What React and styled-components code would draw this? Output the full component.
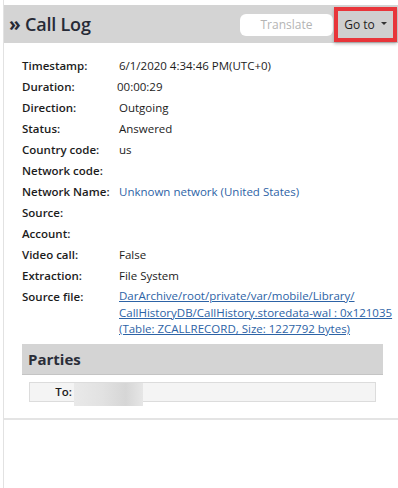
import React from "react";
import styled, { createGlobalStyle } from "styled-components";

const GlobalStyle = createGlobalStyle`
  html, body {
    margin: 0;
    padding: 0;
    background: #ffffff;
    font-family: "Open Sans", "Noto Sans", sans-serif;
  }
`;

const fields = [
  { label: "Timestamp:", value: "6/1/2020 4:34:46 PM(UTC+0)" },
  { label: "Duration:", value: "00:00:29", shift: -2 },
  { label: "Direction:", value: "Outgoing" },
  { label: "Status:", value: "Answered" },
  { label: "Country code:", value: "us" },
  { label: "Network code:", value: "" },
  { label: "Network Name:", value: "Unknown network (United States)", kind: "blue" },
  { label: "Source:", value: "" },
  { label: "Account:", value: "" },
  { label: "Video call:", value: "False" },
  { label: "Extraction:", value: "File System" },
];

function App() {
  return (
    <Page>
      <GlobalStyle />
      <Panel>
        <Header>
          <Title>
            <Chevron>»</Chevron> Call Log
          </Title>
          <Actions>
            <TranslateButton>Translate</TranslateButton>
            <GoToButton>
              Go to <Caret />
            </GoToButton>
          </Actions>
        </Header>

        <Fields>
          {fields.map((f) => (
            <Row key={f.label}>
              <Label>{f.label}</Label>
              <Value $blue={f.kind === "blue"} $shift={f.shift || 0}>
                {f.value}
              </Value>
            </Row>
          ))}
          <Row>
            <Label>Source file:</Label>
            <LinkValue href="#">
              DarArchive/root/private/var/mobile/Library/
              <br />
              CallHistoryDB/CallHistory.storedata-wal : 0x121035
              <br />
              (Table: ZCALLRECORD, Size: 1227792 bytes)
            </LinkValue>
          </Row>
        </Fields>

        <Section>
          <SectionHeader>Parties</SectionHeader>
          <PartyRow>
            <PartyLabel>To:</PartyLabel>
            <Redacted />
          </PartyRow>
        </Section>
      </Panel>
    </Page>
  );
}

export default App;

const Page = styled.div`
  width: 395px;
  height: 488px;
  padding-top: 5px;
  box-sizing: border-box;
  border-left: 1px solid #e2e2e2;
  margin-left: 3px;
  overflow: hidden;
`;

const Panel = styled.div`
  border-bottom: 2px solid #e4e4e4;
  padding-bottom: 16px;
`;

const Header = styled.div`
  height: 38px;
  background: #d4d4d4;
  display: flex;
  align-items: center;
  justify-content: space-between;
  padding-left: 5px;
  padding-right: 1px;
`;

const Title = styled.div`
  font-size: 18px;
  font-weight: 600;
  color: #262a36;
  letter-spacing: -0.2px;
`;

const Chevron = styled.span`
  font-size: 19px;
  font-weight: 700;
`;

const Actions = styled.div`
  display: flex;
  align-items: center;
  gap: 1px;
  padding-top: 1px;
`;

const TranslateButton = styled.div`
  width: 93px;
  height: 22px;
  background: #ffffff;
  border-radius: 6px;
  display: flex;
  align-items: center;
  justify-content: center;
  font-size: 12px;
  color: #b4b4b4;
`;

const GoToButton = styled.div`
  width: 55px;
  height: 27px;
  border: 4px solid #e8353a;
  background: #cfcfcf;
  display: flex;
  align-items: center;
  justify-content: center;
  gap: 6px;
  font-size: 12px;
  color: #1e1e1e;
  box-shadow: 0 2px 3px rgba(0, 0, 0, 0.25);
`;

const Caret = styled.span`
  width: 0;
  height: 0;
  border-left: 3px solid transparent;
  border-right: 3px solid transparent;
  border-top: 3px solid #333;
  margin-top: -2px;
`;

const Fields = styled.div`
  padding: 12px 0 0 18px;
  display: flex;
  flex-direction: column;
`;

const Row = styled.div`
  display: flex;
  min-height: 21px;
  font-size: 11.5px;
  line-height: 21px;
`;

const Label = styled.div`
  width: 97px;
  flex: none;
  font-weight: 600;
  color: #1c1c1c;
`;

const Value = styled.div`
  color: ${(p) => (p.$blue ? "#2d63a6" : "#1c1c1c")};
  margin-left: ${(p) => p.$shift}px;
`;

const LinkValue = styled.a`
  color: #2d63a6;
  text-decoration: underline;
  line-height: 16.5px;
  padding-top: 2px;
`;

const Section = styled.div`
  margin: 6px 15px 0 18px;
`;

const SectionHeader = styled.div`
  height: 30px;
  background: #d4d4d4;
  font-size: 15px;
  font-weight: 700;
  color: #2a2d38;
  display: flex;
  align-items: center;
  padding-left: 6px;
  border-bottom: 1px solid #c4c4c4;
`;

const PartyRow = styled.div`
  margin: 7px 7px 0 7px;
  height: 18px;
  border: 1px solid #dcdcdc;
  background: #f4f4f4;
  display: flex;
  align-items: flex-start;
  font-size: 11.5px;
`;

const PartyLabel = styled.div`
  width: 42px;
  text-align: right;
  font-weight: 600;
  line-height: 18px;
  color: #1c1c1c;
`;

const Redacted = styled.div`
  width: 69px;
  height: 23px;
  margin-left: 2px;
  background: linear-gradient(90deg, #e9e9e9 0%, #e2e2e2 40%, #d6d6d6 75%, #e6e6e6 100%);
`;
